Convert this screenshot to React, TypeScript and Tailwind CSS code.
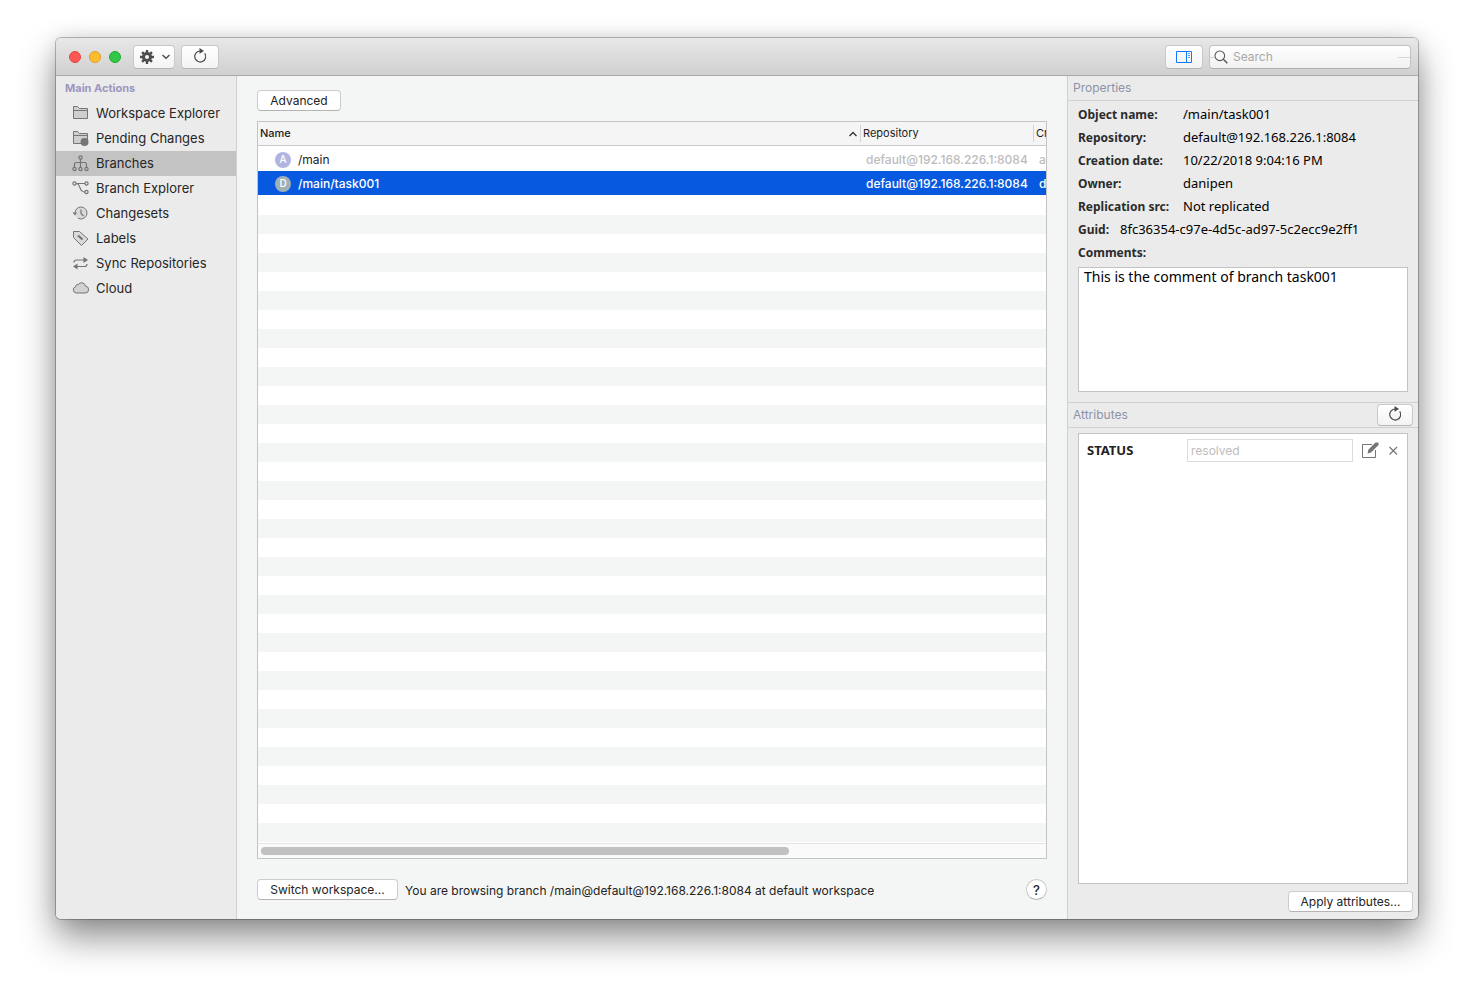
import React from 'react';

const stroke = { fill: 'none', stroke: '#757575', strokeWidth: 1 } as const;

const FolderShape: React.FC = () => (
  <path d="M1.5 13.5v-12h4l2 2h8v10zM1.5 5.5h14" {...stroke} fill="#cfcfcf" />
);

const icons: Record<string, React.ReactNode> = {
  folder: <FolderShape />,
  pending: (
    <>
      <FolderShape />
      <circle cx="12.500" cy="12" r="4" fill="#757575" />
    </>
  ),
  branches: (
    <g {...stroke} strokeWidth="1.200">
      <path d="M8.500 4v8M2.500 12v-2.500q0-2 2-2h8q2 0 2 2V12" />
      <circle cx="8.500" cy="2.500" r="1.600" />
      <circle cx="2.500" cy="14" r="1.600" />
      <circle cx="8.500" cy="14" r="1.600" />
      <circle cx="14.500" cy="14" r="1.600" />
    </g>
  ),
  explorer: (
    <g {...stroke} strokeWidth="1.200">
      <path d="M4 3.500h9M4 3.500c5.500 0 2 8.500 9 8.500" />
      <circle cx="2.500" cy="3.500" r="1.600" />
      <circle cx="14.500" cy="3.500" r="1.600" />
      <circle cx="14.500" cy="12" r="1.600" />
    </g>
  ),
  changesets: (
    <g {...stroke}>
      <circle cx="9" cy="8" r="6" fill="#dadada" stroke="none" />
      <path d="M3 8.500a6 6 0 1 1 3 4.700" />
      <path d="M9 4.500v4l2.500 2.500" strokeWidth="1.200" />
      <path d="M.5 7.500l2.500 3 2-3z" fill="#757575" stroke="none" />
    </g>
  ),
  labels: (
    <g {...stroke}>
      <path d="M1.500 1.500h6l8.500 7.500-6.500 6.500-8-8z" fill="#dadada" />
      <path d="M6 5.500l4.500 4" strokeWidth="2.200" />
    </g>
  ),
  sync: (
    <g {...stroke} strokeWidth="1.200">
      <path d="M2 7.500q0-2.500 2.500-2.500H13M15 9q0 2.500-2.500 2.500H4" />
      <path d="M11.500 2L16 5l-4.500 3zM5.500 8.500L1 11.500l4.500 3z" fill="#757575" stroke="none" />
    </g>
  ),
  cloud: (
    <path
      d="M4 13a3.200 3.200 0 0 1-.5-6.200 2.500 2.500 0 0 1 2.700-2.300 4 4 0 0 1 7.300 1.700 3.400 3.400 0 0 1-.5 6.800z"
      {...stroke}
      fill="#d2d2d2"
    />
  ),
};

const menu = [
  { label: 'Workspace Explorer', icon: 'folder' },
  { label: 'Pending Changes', icon: 'pending' },
  { label: 'Branches', icon: 'branches', active: true },
  { label: 'Branch Explorer', icon: 'explorer' },
  { label: 'Changesets', icon: 'changesets' },
  { label: 'Labels', icon: 'labels' },
  { label: 'Sync Repositories', icon: 'sync' },
  { label: 'Cloud', icon: 'cloud' },
];

const branches = [
  { name: '/main', repo: 'default@192.168.226.1:8084', by: 'a', badge: 'A', color: 'bg-[#b0b5e0]' },
  { name: '/main/task001', repo: 'default@192.168.226.1:8084', by: 'd', badge: 'D', color: 'bg-[#9fb0b8]', selected: true },
];

const properties = [
  { label: 'Object name:', value: '/main/task001' },
  { label: 'Repository:', value: 'default@192.168.226.1:8084' },
  { label: 'Creation date:', value: '10/22/2018 9:04:16 PM' },
  { label: 'Owner:', value: 'danipen' },
  { label: 'Replication src:', value: 'Not replicated' },
  { label: 'Guid:', value: '8fc36354-c97e-4d5c-ad97-5c2ecc9e2ff1', narrow: true },
];

const pushButton =
  'flex h-[21px] items-center justify-center rounded border border-[#cdcdcd] border-b-[#b4b4b4] bg-white text-xs text-[#222]';
const toolButton =
  'flex items-center justify-center rounded border border-[#c9c9c9] border-b-[#b6b6b6] bg-linear-to-b from-white to-[#f3f3f3]';

const RefreshIcon: React.FC = () => (
  <svg width="14" height="16" viewBox="0 0 14 16" fill="none" aria-hidden="true">
    <path d="M11.700 5.300A5.500 5.500 0 1 1 7.500 3" stroke="#4a4a4a" strokeWidth="1.200" />
    <path d="M6.500 0L11 3 6.500 5.800z" fill="#4a4a4a" />
  </svg>
);

const GearIcon: React.FC = () => (
  <svg width="14" height="14" viewBox="0 0 14 14" aria-hidden="true">
    <g stroke="#4d4d4d" strokeWidth="2.400">
      <path d="M7 0v3.500M7 10.500V14M0 7h3.500M10.500 7H14M2.050 2.050l2.500 2.500M9.450 9.450l2.500 2.500M2.050 11.950l2.500-2.500M9.450 4.550l2.500-2.500" />
    </g>
    <circle cx="7" cy="7" r="3.500" fill="none" stroke="#4d4d4d" strokeWidth="3" />
  </svg>
);

const TitleBar: React.FC = () => (
  <header className="flex h-[38px] shrink-0 items-center justify-between border-b border-[#a9a9a9] bg-linear-to-b from-[#e8e8e8] to-[#d0d0d0] pr-[7px] pl-[13px]">
    <div className="flex items-center">
      <div className="mr-3 flex gap-2">
        <button aria-label="Close" className="size-3 rounded-full border border-[#e2463f] bg-[#fc5753]" />
        <button aria-label="Minimize" className="size-3 rounded-full border border-[#dfa023] bg-[#fdbc2e]" />
        <button aria-label="Zoom" className="size-3 rounded-full border border-[#1dad2b] bg-[#33c748]" />
      </div>
      <button aria-label="Settings" className={`${toolButton} h-6 w-[42px] gap-2 pl-0.5`}>
        <GearIcon />
        <svg width="8" height="6" viewBox="0 0 8 6" fill="none" aria-hidden="true">
          <path d="M.5 1L4 4.300 7.500 1" stroke="#4a4a4a" strokeWidth="1.300" />
        </svg>
      </button>
      <button aria-label="Refresh" className={`${toolButton} ml-1.5 h-6 w-[38px] pb-0.5`}>
        <RefreshIcon />
      </button>
    </div>
    <div className="flex gap-1.5">
      <button aria-label="Toggle properties" className={`${toolButton} h-6 w-[38px]`}>
        <svg width="16" height="12" viewBox="0 0 16 12" fill="none" stroke="#1277f5" aria-hidden="true">
          <path d="M.5.5h15v11H.5zM10.500 .5v11" />
          <path d="M12 2.500h2M12 4.500h2M12 6.500h2" strokeOpacity=".7" />
        </svg>
      </button>
      <div className="flex h-6 w-[202px] items-center rounded border border-[#c2c2c2] border-b-[#adadad] bg-linear-to-b from-white to-[#f1f1f1] pt-px">
        <span className="h-px w-1 bg-[#d5d5d5]" />
        <svg width="14" height="14" viewBox="0 0 14 14" fill="none" stroke="#555" aria-hidden="true">
          <circle cx="5.800" cy="5.800" r="4.800" strokeWidth="1.100" />
          <path d="M9.300 9.300L13.300 13.300" strokeWidth="1.400" />
        </svg>
        <input
          type="search"
          aria-label="Search"
          placeholder="Search"
          className="ml-[5px] min-w-0 flex-1 bg-transparent text-xs outline-none placeholder:text-[#a8a8a8]"
        />
        <span className="h-px w-3 bg-[#d5d5d5]" />
      </div>
    </div>
  </header>
);

const Sidebar: React.FC = () => (
  <nav className="w-[181px] shrink-0 border-r border-[#d0d0d0] bg-[#ebebeb]">
    <h2 className="h-[25px] pl-[9px] text-[11px] leading-6 font-bold text-[#9c96c0]">Main Actions</h2>
    {menu.map((item) => (
      <a
        key={item.label}
        href="#"
        className={`flex h-[25px] items-center gap-[7px] pl-4 text-[13px] text-[#262626] ${item.active ? 'bg-[#c3c3c3]' : ''}`}
      >
        <svg width="17" height="17" viewBox="0 0 17 17" className="shrink-0" aria-hidden="true">
          {icons[item.icon]}
        </svg>
        {item.label}
      </a>
    ))}
  </nav>
);

const BranchTable: React.FC = () => (
  <div className="mt-2.5 flex flex-1 flex-col overflow-hidden border border-[#c3c3c3] bg-white">
    <table className="w-full table-fixed border-separate border-spacing-0 text-left whitespace-nowrap">
      <thead>
        <tr className="h-6 bg-[#f5f5f5] text-[11px] text-[#1c1c1c]">
          <th className="border-b border-[#c8c8c8] p-0 pl-0.5 font-medium">
            <div className="flex items-center justify-between pr-[3px]">
              Name
              <svg width="8" height="6" viewBox="0 0 8 6" fill="none" aria-hidden="true">
                <path d="M.5 5L4 1.500 7.500 5" stroke="#333" strokeWidth="1.300" />
              </svg>
            </div>
          </th>
          <th className="w-[173px] border-b border-[#c8c8c8] p-0 font-normal">
            <div className="border-l border-[#d2d2d2] pl-0.5">Repository</div>
          </th>
          <th className="w-[13px] overflow-hidden border-b border-[#c8c8c8] p-0 font-normal">
            <div className="border-l border-[#d2d2d2] pl-0.5">Cr</div>
          </th>
        </tr>
      </thead>
      <tbody>
        {branches.map((row) => {
          const cell = row.selected ? 'border-b border-white pt-0.5' : 'pt-0.5';
          return (
            <tr
              key={row.name}
              className={`h-[25px] text-xs ${row.selected ? 'bg-[#075ae0] text-white' : 'text-[#bcbcbc]'}`}
            >
              <td className={`${cell} pl-[17px]`}>
                <div className={`flex items-center gap-[7px] ${row.selected ? 'font-medium' : 'text-[#222]'}`}>
                  <span className={`flex size-4 items-center justify-center rounded-full text-[10px] font-medium text-white ${row.color}`}>
                    {row.badge}
                  </span>
                  {row.name}
                </div>
              </td>
              <td className={`${cell} overflow-hidden pl-1.5 font-medium`}>{row.repo}</td>
              <td className={`${cell} overflow-hidden pl-1.5 font-medium`}>{row.by}</td>
            </tr>
          );
        })}
      </tbody>
    </table>
    <div className="flex-1 bg-[repeating-linear-gradient(to_bottom,#fff_0_19px,#f4f5f5_19px_38px)]" />
    <div className="h-[15px] border-t border-[#e4e4e4] bg-[#fafafa] px-[3px] pt-[3px]">
      <div className="h-2 w-[67.5%] rounded-full bg-[#c1c1c1]" />
    </div>
  </div>
);

const PropertiesPanel: React.FC = () => (
  <aside className="flex w-[351px] shrink-0 flex-col border-l border-[#d0d0d0] bg-[#ebebeb]">
    <h2 className="h-[25px] border-b border-[#d0d0d0] pl-[5px] text-xs leading-6 text-[#8c93a8]">Properties</h2>
    <dl className="px-2.5 pt-0.5 font-['Noto_Sans',sans-serif]">
      {properties.map((p) => (
        <div key={p.label} className="flex h-[23px] items-center">
          <dt className={`shrink-0 text-xs font-bold text-[#2b2b2b] ${p.narrow ? 'w-[42px]' : 'w-[105px]'}`}>{p.label}</dt>
          <dd className="text-[13px] whitespace-nowrap text-black">{p.value}</dd>
        </div>
      ))}
    </dl>
    <label htmlFor="comments" className="px-2.5 font-['Noto_Sans',sans-serif] text-xs leading-[23px] font-bold text-[#2b2b2b]">
      Comments:
    </label>
    <textarea
      id="comments"
      defaultValue="This is the comment of branch task001"
      className="mx-2.5 mt-[3px] h-[125px] shrink-0 resize-none border border-[#c3c3c3] bg-white px-[5px] font-['Noto_Sans',sans-serif] text-sm leading-[17px] text-black outline-none"
    />
    <div className="mt-2.5 flex h-[26px] shrink-0 items-center justify-between border-y border-[#d0d0d0] px-[5px]">
      <h2 className="text-xs text-[#8c93a8]">Attributes</h2>
      <button aria-label="Refresh attributes" className={`${toolButton} h-[22px] w-9 pb-0.5`}>
        <RefreshIcon />
      </button>
    </div>
    <div className="mx-2.5 mt-[5px] flex-1 border border-[#c3c3c3] bg-white px-2 pt-[5px]">
      <div className="flex items-center">
        <label htmlFor="status" className="w-[100px] font-['Noto_Sans',sans-serif] text-[13px] font-bold text-[#222]">
          STATUS
        </label>
        <input
          id="status"
          defaultValue="resolved"
          className="h-[23px] min-w-0 flex-1 border border-[#dcdcdc] px-[3px] text-xs text-[#bdbdbd] outline-none"
        />
        <button aria-label="Edit attribute" className="ml-[9px]">
          <svg width="17" height="17" viewBox="0 0 17 17" fill="none" aria-hidden="true">
            <path d="M10 2.500H.5v13h13V8" stroke="#757575" />
            <path d="M5.500 11.500l1-4L13.500.5H16.500v2.500l-7.500 7.500z" fill="#757575" />
          </svg>
        </button>
        <button aria-label="Remove attribute" className="ml-2.5 pr-px">
          <svg width="9" height="9" viewBox="0 0 9 9" fill="none" aria-hidden="true">
            <path d="M.5 1l7.500 7.500M8 1L.5 8.500" stroke="#757575" strokeWidth="1.200" />
          </svg>
        </button>
      </div>
    </div>
    <button className={`${pushButton} mt-[7px] mr-[5px] mb-[7px] w-[125px] shrink-0 self-end`}>Apply attributes...</button>
  </aside>
);

const App: React.FC = () => {
  return (
    <div className="flex min-h-screen flex-col bg-white px-14 pt-[38px] pb-[74px] font-[Inter,sans-serif]">
      <div className="flex flex-1 flex-col overflow-hidden rounded-[5px] shadow-[0_0_0_1px_rgba(0,0,0,0.25),0_18px_36px_rgba(0,0,0,0.45),0_0_18px_rgba(0,0,0,0.1)]">
        <TitleBar />
        <div className="flex flex-1">
          <Sidebar />
          <main className="flex min-w-0 flex-1 flex-col bg-[#f4f6f5] px-5 pt-3.5 pb-[19px]">
            <button className={`${pushButton} w-21 self-start`}>Advanced</button>
            <BranchTable />
            <div className="mt-5 flex items-center">
              <button className={`${pushButton} w-[141px] shrink-0`}>Switch workspace...</button>
              <p className="ml-[7px] flex-1 truncate pt-0.5 text-xs text-[#222]">
                You are browsing branch /main@default@192.168.226.1:8084 at default workspace
              </p>
              <button
                aria-label="Help"
                className="size-[21px] rounded-full border border-[#c9c9c9] border-b-[#b0b0b0] bg-white text-[13px] leading-[18px] font-medium text-[#222]"
              >
                ?
              </button>
            </div>
          </main>
          <PropertiesPanel />
        </div>
      </div>
    </div>
  );
};

export default App;
